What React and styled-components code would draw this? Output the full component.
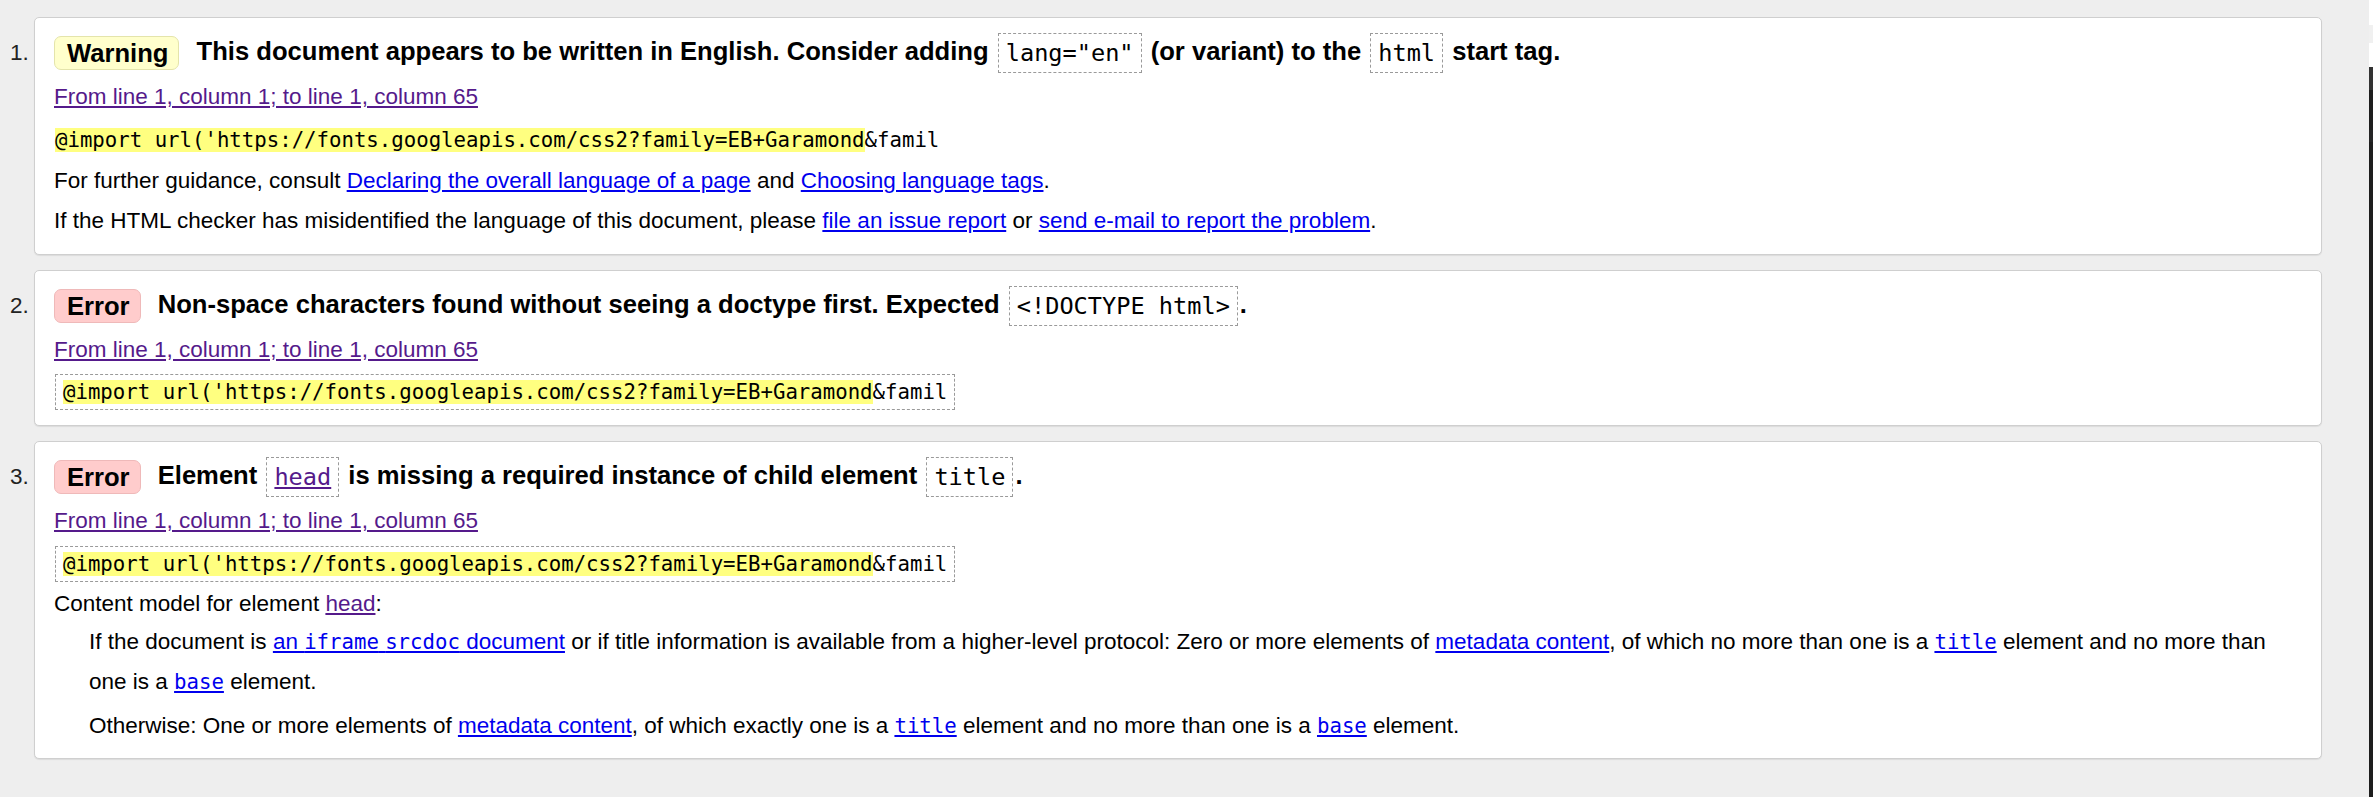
import React from "react";
import styled, { createGlobalStyle, css } from "styled-components";

const GlobalStyle = createGlobalStyle`
  html, body { margin: 0; padding: 0; background: #eeeeee; }
  body { font-family: "Liberation Sans", Arial, sans-serif; color: #000; }
`;

const Page = styled.div`
  display: flex;
  width: 2373px;
  height: 797px;
  overflow: hidden;
  background: #eeeeee;
`;

const Messages = styled.ol`
  flex: 1;
  margin: 0;
  padding: 17px 47px 0 0;
  list-style: none;
  display: flex;
  flex-direction: column;
  gap: 15px;
`;

const Item = styled.li`
  display: flex;
  align-items: flex-start;
`;

const Num = styled.span`
  width: 34px;
  box-sizing: border-box;
  padding: 10px 0 0 10px;
  font-size: 22.5px;
  line-height: 52px;
  color: #222;
  flex: none;
`;

const Card = styled.div`
  flex: 1;
  min-width: 0;
  background: #fff;
  border: 1px solid #cfcfcf;
  border-radius: 5px;
  box-shadow: 0 1px 1px rgba(0, 0, 0, 0.08);
  padding: 7px 19px 12px;
`;

const Title = styled.p`
  margin: 0;
  font-size: 25.6px;
  font-weight: bold;
  line-height: 52px;
  white-space: nowrap;
`;

const Badge = styled.span`
  display: inline-block;
  vertical-align: middle;
  line-height: 32px;
  padding: 0 10px 0 12px;
  border-radius: 7px;
  margin-right: 10px;
  border: 1px solid ${(p) => (p.$kind === "error" ? "#efb9b9" : "#e4e4ab")};
  background: ${(p) => (p.$kind === "error" ? "#ffcccc" : "#ffffcc")};
`;

const TitleCode = styled.code`
  display: inline-block;
  vertical-align: middle;
  font-family: "DejaVu Sans Mono", "Liberation Mono", monospace;
  font-weight: normal;
  font-size: 23.6px;
  line-height: 38px;
  padding: 0 7px;
  margin: 0 2px;
  border: 1px dashed #9a9a9a;
`;

const Line = styled.p`
  margin: ${(p) => p.$mt || 0}px 0 0;
  font-size: 22.5px;
  line-height: ${(p) => p.$lh || 40.5}px;
  padding-left: ${(p) => (p.$indent ? 35 : 0)}px;
`;

const Link = styled.a`
  color: ${(p) => (p.$visited ? "#551a8b" : "#0000ee")};
  text-decoration: underline;
`;

const Extract = styled.p`
  margin: 4px 0 3px;
  font-family: "DejaVu Sans Mono", "Liberation Mono", monospace;
  font-size: 20.7px;
  line-height: 34px;
  white-space: pre;
  width: fit-content;
  ${(p) =>
    p.$boxed
      ? css`
          border: 1px dashed #9a9a9a;
          padding: 0 7px;
          margin-left: 1px;
        `
      : css`
          border: 1px solid transparent;
          padding: 0;
        `}
`;

const Mark = styled.mark`
  background: #ffff80;
  color: inherit;
`;

const Mono = styled.code`
  font-family: "DejaVu Sans Mono", "Liberation Mono", monospace;
  font-size: 20.7px;
`;

const Strip = styled.div`
  width: 4px;
  flex: none;
  display: flex;
  flex-direction: column;
`;

const StripSeg = styled.div`
  height: ${(p) => p.$h}px;
  background: ${(p) => p.$bg};
  flex: ${(p) => (p.$grow ? 1 : "none")};
`;

const extractText = (
  <>
    <Mark>@import url('https://fonts.googleapis.com/css2?family=EB+Garamond</Mark>&amp;famil
  </>
);

const Location = () => (
  <Line>
    <Link $visited href="#l">From line 1, column 1; to line 1, column 65</Link>
  </Line>
);

export default function App() {
  return (
    <Page>
      <GlobalStyle />
      <Messages>
        <Item>
          <Num>1.</Num>
          <Card>
            <Title>
              <Badge $kind="warning">Warning</Badge> This document appears to be written in English. Consider adding{" "}
              <TitleCode>lang="en"</TitleCode> (or variant) to the <TitleCode>html</TitleCode> start tag.
            </Title>
            <Location />
            <Extract>{extractText}</Extract>
            <Line>
              For further guidance, consult <Link href="#a">Declaring the overall language of a page</Link> and{" "}
              <Link href="#b">Choosing language tags</Link>.
            </Line>
            <Line>
              If the HTML checker has misidentified the language of this document, please{" "}
              <Link href="#c">file an issue report</Link> or <Link href="#d">send e-mail to report the problem</Link>.
            </Line>
          </Card>
        </Item>
        <Item>
          <Num>2.</Num>
          <Card>
            <Title>
              <Badge $kind="error">Error</Badge> Non-space characters found without seeing a doctype first. Expected{" "}
              <TitleCode>&lt;!DOCTYPE html&gt;</TitleCode>.
            </Title>
            <Location />
            <Extract $boxed>{extractText}</Extract>
          </Card>
        </Item>
        <Item>
          <Num>3.</Num>
          <Card>
            <Title>
              <Badge $kind="error">Error</Badge> Element{" "}
              <TitleCode>
                <Link $visited href="#h">head</Link>
              </TitleCode>{" "}
              is missing a required instance of child element <TitleCode>title</TitleCode>.
            </Title>
            <Location />
            <Extract $boxed>{extractText}</Extract>
            <Line $lh={37}>
              Content model for element <Link $visited href="#h">head</Link>:
            </Line>
            <Line $indent>
              If the document is{" "}
              <Link href="#e">
                an <Mono>iframe</Mono> <Mono>srcdoc</Mono> document
              </Link>{" "}
              or if title information is available from a higher-level protocol: Zero or more elements of{" "}
              <Link href="#f">metadata content</Link>, of which no more than one is a{" "}
              <Link href="#g">
                <Mono>title</Mono>
              </Link>{" "}
              element and no more than one is a{" "}
              <Link href="#i">
                <Mono>base</Mono>
              </Link>{" "}
              element.
            </Line>
            <Line $indent $mt={3}>
              Otherwise: One or more elements of <Link href="#f">metadata content</Link>, of which exactly one is a{" "}
              <Link href="#g">
                <Mono>title</Mono>
              </Link>{" "}
              element and no more than one is a{" "}
              <Link href="#i">
                <Mono>base</Mono>
              </Link>{" "}
              element.
            </Line>
          </Card>
        </Item>
      </Messages>
      <Strip>
        <StripSeg $h={25} $bg="#ffffff" />
        <StripSeg $h={18} $bg="#f0f0f0" />
        <StripSeg $h={24} $bg="#ffffff" />
        <StripSeg $h={23} $bg="#333333" />
        <StripSeg $h={40} $bg="#1e1e1e" />
        <StripSeg $h={12} $bg="#252526" />
        <StripSeg $grow $bg="#1e1e1e" />
      </Strip>
    </Page>
  );
}
